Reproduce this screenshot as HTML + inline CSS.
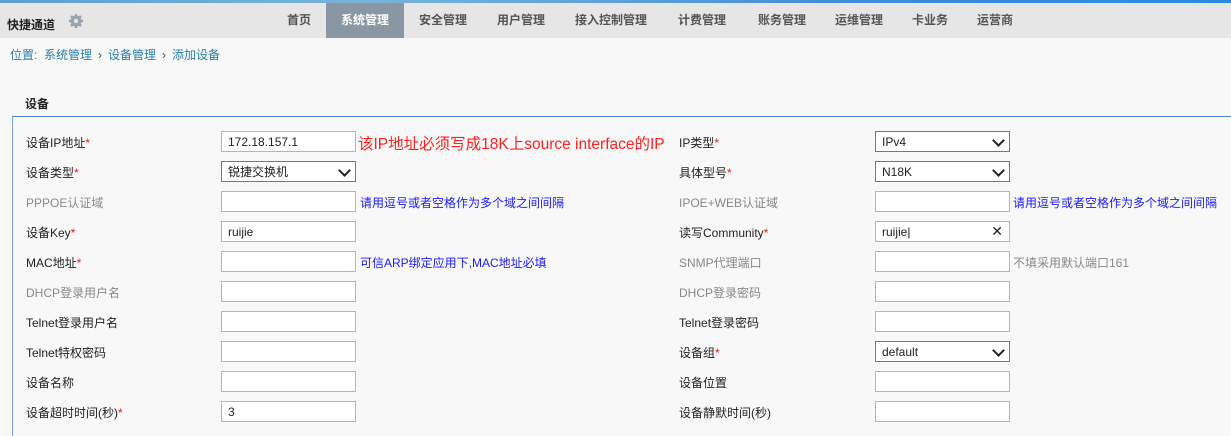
<!DOCTYPE html>
<html><head><meta charset="utf-8"><style>
*{margin:0;padding:0;box-sizing:border-box}
body{width:1231px;height:427px;overflow:hidden;background:#f8f8f8;font-family:"Liberation Sans","Noto Sans CJK SC",sans-serif;font-size:12px;color:#222;position:relative}
.top{position:absolute;left:0;top:0;width:1231px;height:3px;background:linear-gradient(90deg,#5b9fd0,#7ab3da 30%,#3f8bd8 70%,#2b8be0)}
.nav{position:absolute;left:0;top:3px;width:1231px;height:35px;background:#e6e6e6}
.brand{position:absolute;left:7px;top:13px;font-size:12px;font-weight:bold;color:#222}
.nav .it{position:absolute;top:0;height:35px;line-height:35px;font-size:12px;font-weight:bold;color:#555;text-align:center}
.nav .act{background:#8a96a3;color:#fff}
.crumb{position:absolute;left:10px;top:46px;color:#2a7fa8;font-size:12px}
.crumb b{font-weight:normal;color:#444;margin:0 6px}
.title{position:absolute;left:25px;top:95px;font-weight:bold;font-size:12px}
.box{position:absolute;left:12px;top:116px;width:1230px;height:320px;border-top:1px solid #4a86c0;border-left:1px solid #7aa6d0}
.l{position:absolute;font-size:12px;color:#222}
.g{color:#888}
.l i{color:#e02020;font-style:normal}
.in{position:absolute;width:135px;height:21px;background:#fff;border:1px solid #b5b5b5;padding-left:6px;padding-top:1px;line-height:19px;font-size:12px}
.sel{border-color:#777}
.sel::after{content:"";position:absolute;right:6px;top:4px;width:7px;height:7px;border-right:2px solid #222;border-bottom:2px solid #222;transform:rotate(45deg)}
.h{position:absolute;color:#1a1aff;font-size:12px}
</style></head><body>
<div class="top"></div>
<div class="nav">
<div class="brand">快捷通道</div>
<svg style="position:absolute;left:68px;top:10px" width="16" height="16" viewBox="0 0 16 16"><circle cx="8" cy="8" r="5.5" fill="#9aa3ab"/><g stroke="#9aa3ab" stroke-width="2.5"><line x1="8" y1="1" x2="8" y2="15"/><line x1="1" y1="8" x2="15" y2="8"/><line x1="3" y1="3" x2="13" y2="13"/><line x1="13" y1="3" x2="3" y2="13"/></g><circle cx="8" cy="8" r="2.2" fill="#e6e6e6"/></svg>
<div class="it" style="left:276px;width:46px">首页</div>
<div class="it act" style="left:326px;width:78px">系统管理</div>
<div class="it" style="left:407px;width:72px">安全管理</div>
<div class="it" style="left:485px;width:72px">用户管理</div>
<div class="it" style="left:568px;width:86px">接入控制管理</div>
<div class="it" style="left:666px;width:72px">计费管理</div>
<div class="it" style="left:746px;width:72px">账务管理</div>
<div class="it" style="left:823px;width:72px">运维管理</div>
<div class="it" style="left:902px;width:56px">卡业务</div>
<div class="it" style="left:968px;width:54px">运营商</div>
</div>
<div class="crumb">位置:&nbsp; 系统管理<b>›</b>设备管理<b>›</b>添加设备</div>
<div class="title">设备</div>
<div class="box"></div>

<div class="l" style="left:26px;top:134px">设备IP地址<i>*</i></div>
<div class="in" style="left:221px;top:131px">172.18.157.1</div>
<div class="l" style="left:358px;top:132px;color:#ff2020;font-size:15.5px">该IP地址必须写成18K上source interface的IP</div>
<div class="l" style="left:679px;top:134px">IP类型<i>*</i></div>
<div class="in sel" style="left:875px;top:131px">IPv4</div>

<div class="l" style="left:26px;top:164px">设备类型<i>*</i></div>
<div class="in sel" style="left:221px;top:161px">锐捷交换机</div>
<div class="l" style="left:679px;top:164px">具体型号<i>*</i></div>
<div class="in sel" style="left:875px;top:161px">N18K</div>

<div class="l g" style="left:26px;top:194px">PPPOE认证域</div>
<div class="in" style="left:221px;top:191px"></div>
<div class="h" style="left:360px;top:194px">请用逗号或者空格作为多个域之间间隔</div>
<div class="l g" style="left:679px;top:194px">IPOE+WEB认证域</div>
<div class="in" style="left:875px;top:191px"></div>
<div class="h" style="left:1013px;top:194px">请用逗号或者空格作为多个域之间间隔</div>

<div class="l" style="left:26px;top:224px">设备Key<i>*</i></div>
<div class="in" style="left:221px;top:221px">ruijie</div>
<div class="l" style="left:679px;top:224px">读写Community<i>*</i></div>
<div class="in" style="left:875px;top:221px">ruijie|<span style="position:absolute;right:6px;top:0;font-size:14px">✕</span></div>

<div class="l" style="left:26px;top:254px">MAC地址<i>*</i></div>
<div class="in" style="left:221px;top:251px"></div>
<div class="h" style="left:360px;top:254px">可信ARP绑定应用下,MAC地址必填</div>
<div class="l g" style="left:679px;top:254px">SNMP代理端口</div>
<div class="in" style="left:875px;top:251px"></div>
<div class="l g" style="left:1013px;top:254px">不填采用默认端口161</div>

<div class="l g" style="left:26px;top:284px">DHCP登录用户名</div>
<div class="in" style="left:221px;top:281px"></div>
<div class="l g" style="left:679px;top:284px">DHCP登录密码</div>
<div class="in" style="left:875px;top:281px"></div>

<div class="l" style="left:26px;top:314px">Telnet登录用户名</div>
<div class="in" style="left:221px;top:311px"></div>
<div class="l" style="left:679px;top:314px">Telnet登录密码</div>
<div class="in" style="left:875px;top:311px"></div>

<div class="l" style="left:26px;top:344px">Telnet特权密码</div>
<div class="in" style="left:221px;top:341px"></div>
<div class="l" style="left:679px;top:344px">设备组<i>*</i></div>
<div class="in sel" style="left:875px;top:341px">default</div>

<div class="l" style="left:26px;top:374px">设备名称</div>
<div class="in" style="left:221px;top:371px"></div>
<div class="l" style="left:679px;top:374px">设备位置</div>
<div class="in" style="left:875px;top:371px"></div>

<div class="l" style="left:26px;top:404px">设备超时时间(秒)<i>*</i></div>
<div class="in" style="left:221px;top:401px">3</div>
<div class="l" style="left:679px;top:404px">设备静默时间(秒)</div>
<div class="in" style="left:875px;top:401px"></div>
</body></html>
